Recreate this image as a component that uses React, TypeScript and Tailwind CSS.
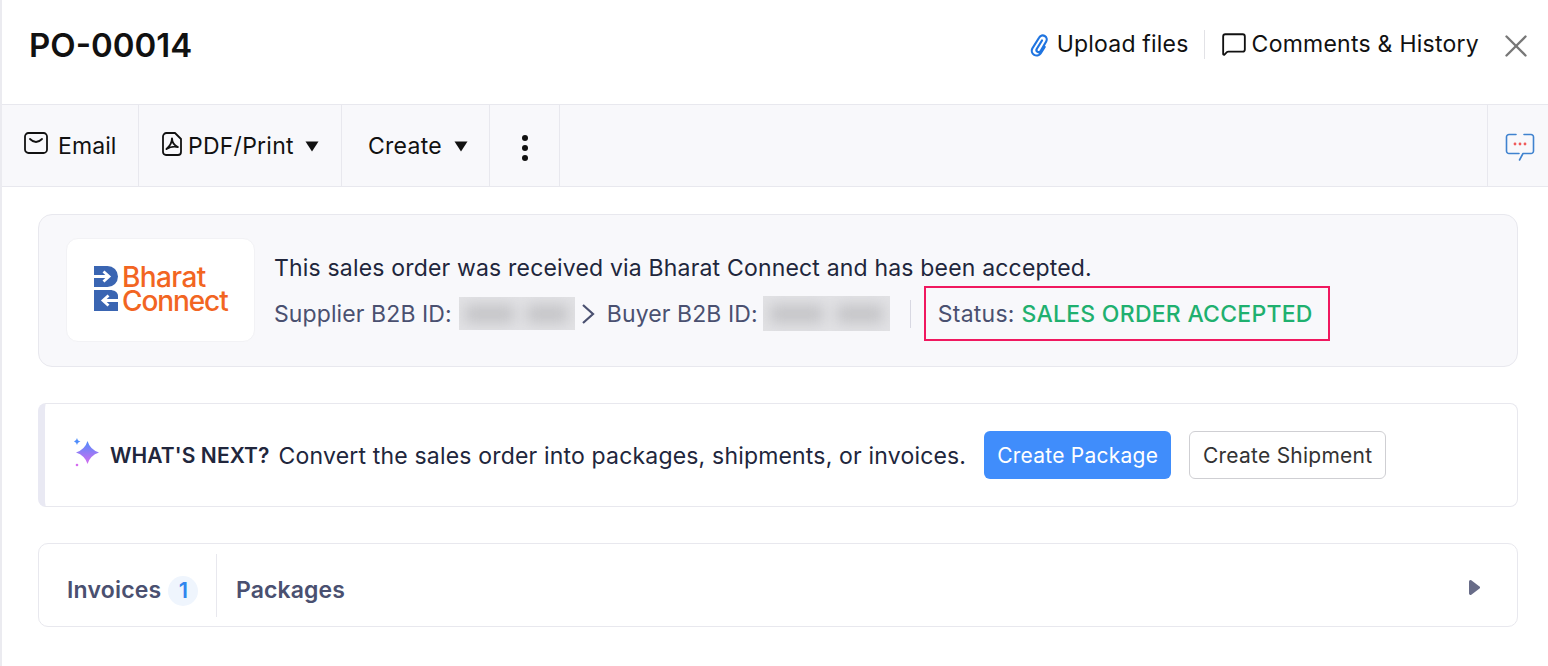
import { MessageSquare, X } from 'lucide-react';

function Caret() {
  return (
    <svg width="14" height="11" viewBox="0 0 14 11" className="shrink-0">
      <path d="M0.5 0.5h13L7 10.5z" fill="#111" />
    </svg>
  );
}

function Clip() {
  return (
    <svg width="20" height="25" viewBox="0 0 20 25" fill="none" stroke="#1f74e0" strokeWidth="2.2" strokeLinecap="round" strokeLinejoin="round">
      <path d="M13 8.500 7.700 17a2.200 2.200 0 0 0 3.800 2.200L17.200 9.500a4 4 0 0 0-7-4L3.300 16.500a4.800 4.800 0 0 0 8.300 4.800l4.100-6.300" />
    </svg>
  );
}

function EnvelopeIcon() {
  return (
    <svg width="24" height="22" viewBox="0 0 24 22" fill="none" stroke="#111" strokeWidth="1.800" strokeLinecap="round" strokeLinejoin="round">
      <rect x="1" y="1" width="22" height="20" rx="3.500" />
      <path d="M6 7c2 2 4 3 6 3s4-1 6-3" />
    </svg>
  );
}

function PdfIcon() {
  return (
    <svg width="20" height="24" viewBox="0 0 20 24" fill="none" stroke="#111" strokeLinejoin="round">
      <path d="M4.500 1h8.500L19 7v13a3 3 0 0 1-3 3H4a3 3 0 0 1-3-3V4.500A3.500 3.500 0 0 1 4.500 1z" strokeWidth="1.800" />
      <path d="M10 6.500c0 3.500-1.500 7-5.500 10.500M10 6.500c0 3.500 2 6.500 5.800 8.500M4.500 17c3.500-2.200 7-3 11.300-2" strokeWidth="1.900" strokeLinecap="round" />
    </svg>
  );
}

function ChatDots() {
  return (
    <svg width="30" height="30" viewBox="0 0 30 30" fill="none">
      <path d="M11 2.500H4a2.500 2.500 0 0 0-2.500 2.500v14A2.500 2.500 0 0 0 4 21.500h10M19 2.500h7A2.500 2.500 0 0 1 28.500 5v14a2.500 2.500 0 0 1-2.500 2.500h-8L14.500 28" stroke="#3f82cf" strokeWidth="1.600" strokeLinecap="round" strokeLinejoin="round" />
      <circle cx="10" cy="12" r="1.400" fill="#f05a5a" />
      <circle cx="15" cy="12" r="1.400" fill="#f05a5a" />
      <circle cx="20" cy="12" r="1.400" fill="#f05a5a" />
    </svg>
  );
}

function Sparkle() {
  return (
    <svg width="26" height="30" viewBox="0 0 26 30">
      <defs>
        <linearGradient id="spark" x1="0" y1="0" x2="0" y2="1">
          <stop offset="0" stopColor="#4f8dfb" />
          <stop offset="1" stopColor="#d56bf0" />
        </linearGradient>
      </defs>
      <path d="M13.500 4Q16 12.500 25 15.500 16 18.500 13.500 27 11 18.500 2 15.500 11 12.500 13.500 4z" fill="url(#spark)" />
      <path d="M3 1Q3.500 4 6.500 4.500 3.500 5 3 8 2.500 5-.5 4.500 2.500 4 3 1z" fill="#4f8dfb" />
      <circle cx="3" cy="28" r="1.300" fill="#d56bf0" />
    </svg>
  );
}

function BharatMark() {
  return (
    <svg width="24" height="45" viewBox="0 0 24 45" fill="none">
      <path d="M0 0h13.500a10.500 10.500 0 0 1 0 21H0z" fill="#3a65b2" />
      <path d="M0 24h16c4 0 8 2 8 6v15H0z" fill="#3a65b2" />
      <path d="M0 10.500h15M9.500 5.500l5.500 5-5.500 5" stroke="#fff" strokeWidth="2.800" />
      <path d="M24 34.500H9M14.500 29.500l-5.500 5 5.500 5" stroke="#fff" strokeWidth="2.800" />
    </svg>
  );
}

function BlurredId({ width, height }: { width: string; height: string }) {
  return (
    <div className={`${width} ${height} shrink-0 overflow-hidden bg-[#e2e2e5]`}>
      <div className="h-full w-full flex items-center justify-around blur-[7px]">
        <div className="h-[18px] w-[42%] bg-[#c4c4c7]" />
        <div className="h-[18px] w-[36%] bg-[#c4c4c7]" />
      </div>
    </div>
  );
}

export default function App() {
  return (
    <div className="h-[666px] w-[1548px] overflow-hidden bg-white border-l-2 border-[#ebebf0] font-['Inter',sans-serif] text-[#111]">
      {/* Header */}
      <div className="h-[104px] flex items-center justify-between pl-[27px] pr-[13px]">
        <h1 className="text-[33px] font-semibold mt-[-12px]">PO-00014</h1>
        <div className="flex items-center mt-[-16px]">
          <span className="mr-[8px]"><Clip /></span>
          <span className="text-[23px] tracking-[0.2px] mr-[15px]">Upload files</span>
          <div className="h-[29px] w-px bg-[#e2e2e6] mr-[16px]" />
          <MessageSquare size={26} strokeWidth={1.700} className="mr-[5px]" />
          <span className="text-[23px] tracking-[0.25px] mr-[18px]">Comments &amp; History</span>
          <X size={38} strokeWidth={1.500} className="text-[#777] mt-[3px]" />
        </div>
      </div>

      {/* Toolbar */}
      <div className="h-[83px] flex items-stretch bg-[#f8f8fb] border-y border-[#e8e8ee]">
        <div className="w-[137px] flex items-center border-r border-[#e8e8ee] pl-[22px] pt-[2px]">
          <span className="mr-[10px] mt-[-8px]"><EnvelopeIcon /></span>
          <span className="text-[23px] tracking-[0.1px]">Email</span>
        </div>
        <div className="w-[203px] flex items-center border-r border-[#e8e8ee] pl-[23px] pt-[2px]">
          <span className="mr-[6px] mt-[-6px]"><PdfIcon /></span>
          <span className="text-[23px] tracking-[0.25px] mr-[11px]">PDF/Print</span>
          <Caret />
        </div>
        <div className="w-[148px] flex items-center border-r border-[#e8e8ee] pl-[26px] pt-[2px]">
          <span className="text-[23px] tracking-[0.25px] mr-[12px]">Create</span>
          <Caret />
        </div>
        <div className="w-[70px] flex flex-col items-center justify-center gap-[4px] border-r border-[#e8e8ee] pt-[4px]">
          <div className="size-[6px] rounded-full bg-[#111]" />
          <div className="size-[6px] rounded-full bg-[#111]" />
          <div className="size-[6px] rounded-full bg-[#111]" />
        </div>
        <div className="ml-auto w-[61px] flex items-center justify-center border-l border-[#e8e8ee] pl-[4px] pt-[2px]">
          <ChatDots />
        </div>
      </div>

      <div className="pl-[36px] pr-[30px] pt-[27px] flex flex-col gap-[36px]">
        {/* Bharat Connect banner */}
        <div className="h-[153px] rounded-[14px] bg-[#f8f8fb] border border-[#e8e8ee] flex items-center pl-[27px]">
          <div className="w-[189px] h-[104px] mt-[-2px] pb-[2px] rounded-[12px] bg-white border border-[#f2f2f5] flex items-center pl-[27px] gap-[4px] shrink-0">
            <BharatMark />
            <div className="text-[#f26522] text-[28px] leading-[24px] font-medium tracking-[-1.1px]">
              <div className="tracking-[-0.6px]">Bharat</div>
              <div>Connect</div>
            </div>
          </div>
          <div className="ml-[19px] mt-[3px] flex flex-col">
            <div className="text-[23px] leading-[30px] tracking-[0.18px] text-[#21263c]">
              This sales order was received via Bharat Connect and has been accepted.
            </div>
            <div className="flex items-center mt-[13px] text-[23px] tracking-[0.1px] text-[#4a5070] leading-[30px] whitespace-nowrap">
              <span className="mr-[7px]">Supplier B2B ID:</span>
              <BlurredId width="w-[116px]" height="h-[33px]" />
              <svg width="14" height="22" viewBox="0 0 14 22" fill="none" className="ml-[6px] mr-[12px] shrink-0">
                <path d="M2 2l10 9-10 9" stroke="#4a5070" strokeWidth="2.200" />
              </svg>
              <span className="mr-[5px]">Buyer B2B ID:</span>
              <BlurredId width="w-[127px]" height="h-[35px]" />
              <div className="h-[28px] w-px shrink-0 bg-[#d8d8e2] ml-[20px] mr-[13px]" />
              <div className="border-2 border-[#f0185f] h-[55px] -my-[13px] w-[406px] shrink-0 flex items-center pl-[12px] tracking-[0.25px]">
                Status:&nbsp;<span className="text-[#1fb06f] font-medium">SALES ORDER ACCEPTED</span>
              </div>
            </div>
          </div>
        </div>

        {/* What's next */}
        <div className="h-[104px] rounded-[8px] bg-white border border-[#e8e8ee] border-l-[7px] border-l-[#e9e9f3] flex items-center pl-[29px]">
          <span className="mr-[10px] mt-[-6px]"><Sparkle /></span>
          <span className="text-[21px] font-semibold tracking-[0.1px] text-[#21263c] mr-[9px] pt-[2px]">WHAT'S NEXT?</span>
          <span className="text-[23px] tracking-[0.18px] text-[#21263c] mr-[18px] pt-[2px]">Convert the sales order into packages, shipments, or invoices.</span>
          <button className="h-[48px] w-[187px] pt-[2px] rounded-[6px] bg-[#408dfb] text-white text-[21px] tracking-[0.25px] mr-[18px]">Create Package</button>
          <button className="h-[48px] w-[197px] pt-[2px] rounded-[6px] bg-white border border-[#cfcfd3] text-[#333] text-[21px] tracking-[0.25px]">Create Shipment</button>
        </div>

        {/* Tabs */}
        <div className="h-[84px] rounded-[10px] bg-white border border-[#e8e8ee] flex items-center">
          <div className="h-[63px] flex items-center border-r border-[#e8e8ee] pl-[28px] pr-[18px] w-[178px] pt-[10px] mt-[1px]">
            <span className="text-[23px] tracking-[0.2px] font-semibold text-[#4a5070]">Invoices</span>
            <span className="ml-[7px] size-[30px] shrink-0 rounded-full bg-[#eff5fd] text-[#2f85ee] text-[22px] font-semibold flex items-center justify-center">1</span>
          </div>
          <span className="ml-[19px] text-[23px] tracking-[0.1px] font-semibold text-[#4a5070] pt-[10px]">Packages</span>
          <svg width="11" height="15" viewBox="0 0 11 15" className="ml-auto mr-[37px] mt-[4px]">
            <path d="M0 1.500a1.500 1.500 0 0 1 2.300-1.200L10.500 6.500a1.300 1.300 0 0 1 0 2L2.300 14.700A1.500 1.500 0 0 1 0 13.500z" fill="#686c88" />
          </svg>
        </div>
      </div>
    </div>
  );
}
